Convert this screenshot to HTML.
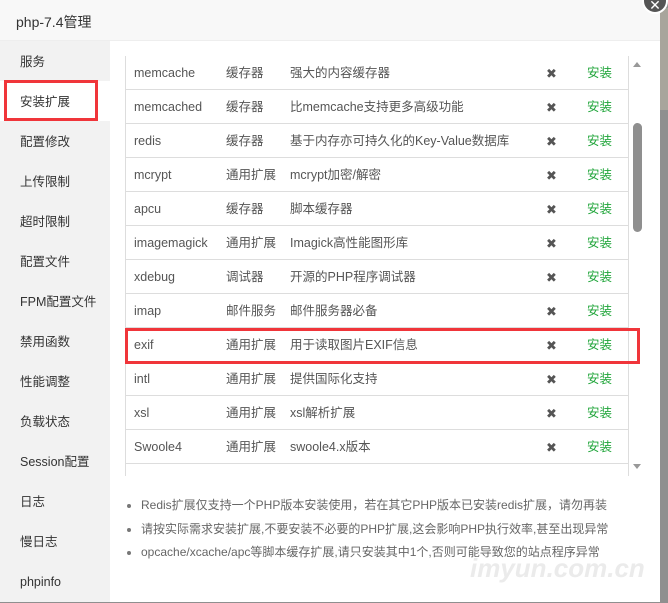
<!DOCTYPE html>
<html><head><meta charset="utf-8"><style>
*{margin:0;padding:0;box-sizing:border-box}
body{width:668px;height:602px;overflow:hidden;background:#8f8f8f;font-family:"Liberation Sans","Noto Sans CJK SC",sans-serif;position:relative}
.dlg{position:absolute;left:0;top:0;width:660px;height:602px;background:#fff}
.title{height:41px;background:#f8f8f8;border-bottom:1px solid #eee;font-size:14px;color:#333;padding:12px 0 0 16px}
.side{position:absolute;left:0;top:41px;width:110px;height:561px;background:#f2f2f2}
.side div{height:40px;line-height:42px;padding-left:20px;font-size:12.5px;color:#333}
.side .act{background:#fff}
.red{position:absolute;border:3px solid #f0353a}
.tbl{position:absolute;left:125px;top:56px;width:504px;height:420px;border-left:1px solid #ddd;border-right:1px solid #ddd;overflow:hidden}
.row{height:34px;border-bottom:1px solid #ddd;position:relative;font-size:12.5px;color:#555;line-height:35px}
.row span{position:absolute;top:0}
.c1{left:8px}.c2{left:100px}.c3{left:164px}.c4{left:420px;color:#555;font-size:13px}.c5{left:461px;color:#20a53a}
.thumb{position:absolute;left:633px;top:123px;width:9px;height:109px;background:#8f8f8f;border-radius:5px}
.tri{position:absolute;left:633px;width:0;height:0;border-left:4px solid transparent;border-right:4px solid transparent}
ul{position:absolute;left:127px;top:495px;font-size:12px;color:#666;list-style:none}
li{height:23.5px;line-height:20px;padding-left:14px;position:relative}
li:before{content:"";position:absolute;left:0;top:9px;width:4px;height:4px;border-radius:2px;background:#777}
.wm{position:absolute;left:470px;top:553px;font-size:26px;font-weight:bold;font-style:italic;color:#ebebeb}
.close{position:absolute;left:642px;top:-12px;width:26px;height:26px;border-radius:13px;background:#555;border:2px solid #fff;color:#fff;font-size:14px;text-align:center;line-height:30px}
</style></head><body>
<div style="position:absolute;left:660px;top:8px;width:8px;height:102px;background:#a8a59c"></div>
<div class="dlg">
<div class="title">php-7.4管理</div>
<div class="side">
<div>服务</div><div class="act">安装扩展</div><div>配置修改</div><div>上传限制</div><div>超时限制</div><div>配置文件</div><div>FPM配置文件</div><div>禁用函数</div><div>性能调整</div><div>负载状态</div><div>Session配置</div><div>日志</div><div>慢日志</div><div>phpinfo</div>
</div>
<div class="red" style="left:4px;top:80px;width:94px;height:41px"></div>
<div class="tbl">
<div class="row"><span class="c1">memcache</span><span class="c2">缓存器</span><span class="c3">强大的内容缓存器</span><span class="c4">✖</span><span class="c5">安装</span></div>
<div class="row"><span class="c1">memcached</span><span class="c2">缓存器</span><span class="c3">比memcache支持更多高级功能</span><span class="c4">✖</span><span class="c5">安装</span></div>
<div class="row"><span class="c1">redis</span><span class="c2">缓存器</span><span class="c3">基于内存亦可持久化的Key-Value数据库</span><span class="c4">✖</span><span class="c5">安装</span></div>
<div class="row"><span class="c1">mcrypt</span><span class="c2">通用扩展</span><span class="c3">mcrypt加密/解密</span><span class="c4">✖</span><span class="c5">安装</span></div>
<div class="row"><span class="c1">apcu</span><span class="c2">缓存器</span><span class="c3">脚本缓存器</span><span class="c4">✖</span><span class="c5">安装</span></div>
<div class="row"><span class="c1">imagemagick</span><span class="c2">通用扩展</span><span class="c3">Imagick高性能图形库</span><span class="c4">✖</span><span class="c5">安装</span></div>
<div class="row"><span class="c1">xdebug</span><span class="c2">调试器</span><span class="c3">开源的PHP程序调试器</span><span class="c4">✖</span><span class="c5">安装</span></div>
<div class="row"><span class="c1">imap</span><span class="c2">邮件服务</span><span class="c3">邮件服务器必备</span><span class="c4">✖</span><span class="c5">安装</span></div>
<div class="row"><span class="c1">exif</span><span class="c2">通用扩展</span><span class="c3">用于读取图片EXIF信息</span><span class="c4">✖</span><span class="c5">安装</span></div>
<div class="row"><span class="c1">intl</span><span class="c2">通用扩展</span><span class="c3">提供国际化支持</span><span class="c4">✖</span><span class="c5">安装</span></div>
<div class="row"><span class="c1">xsl</span><span class="c2">通用扩展</span><span class="c3">xsl解析扩展</span><span class="c4">✖</span><span class="c5">安装</span></div>
<div class="row"><span class="c1">Swoole4</span><span class="c2">通用扩展</span><span class="c3">swoole4.x版本</span><span class="c4">✖</span><span class="c5">安装</span></div>
</div>
<div class="thumb"></div>
<div class="tri" style="top:62px;border-bottom:5px solid #999"></div>
<div class="tri" style="top:464px;border-top:5px solid #999"></div>
<div class="red" style="left:125px;top:328px;width:515px;height:36px"></div>
<ul>
<li>Redis扩展仅支持一个PHP版本安装使用，若在其它PHP版本已安装redis扩展，请勿再装</li>
<li>请按实际需求安装扩展,不要安装不必要的PHP扩展,这会影响PHP执行效率,甚至出现异常</li>
<li>opcache/xcache/apc等脚本缓存扩展,请只安装其中1个,否则可能导致您的站点程序异常</li>
</ul>
<div class="wm">imyun.com.cn</div>
</div>
<div class="close">✕</div>
</body></html>
